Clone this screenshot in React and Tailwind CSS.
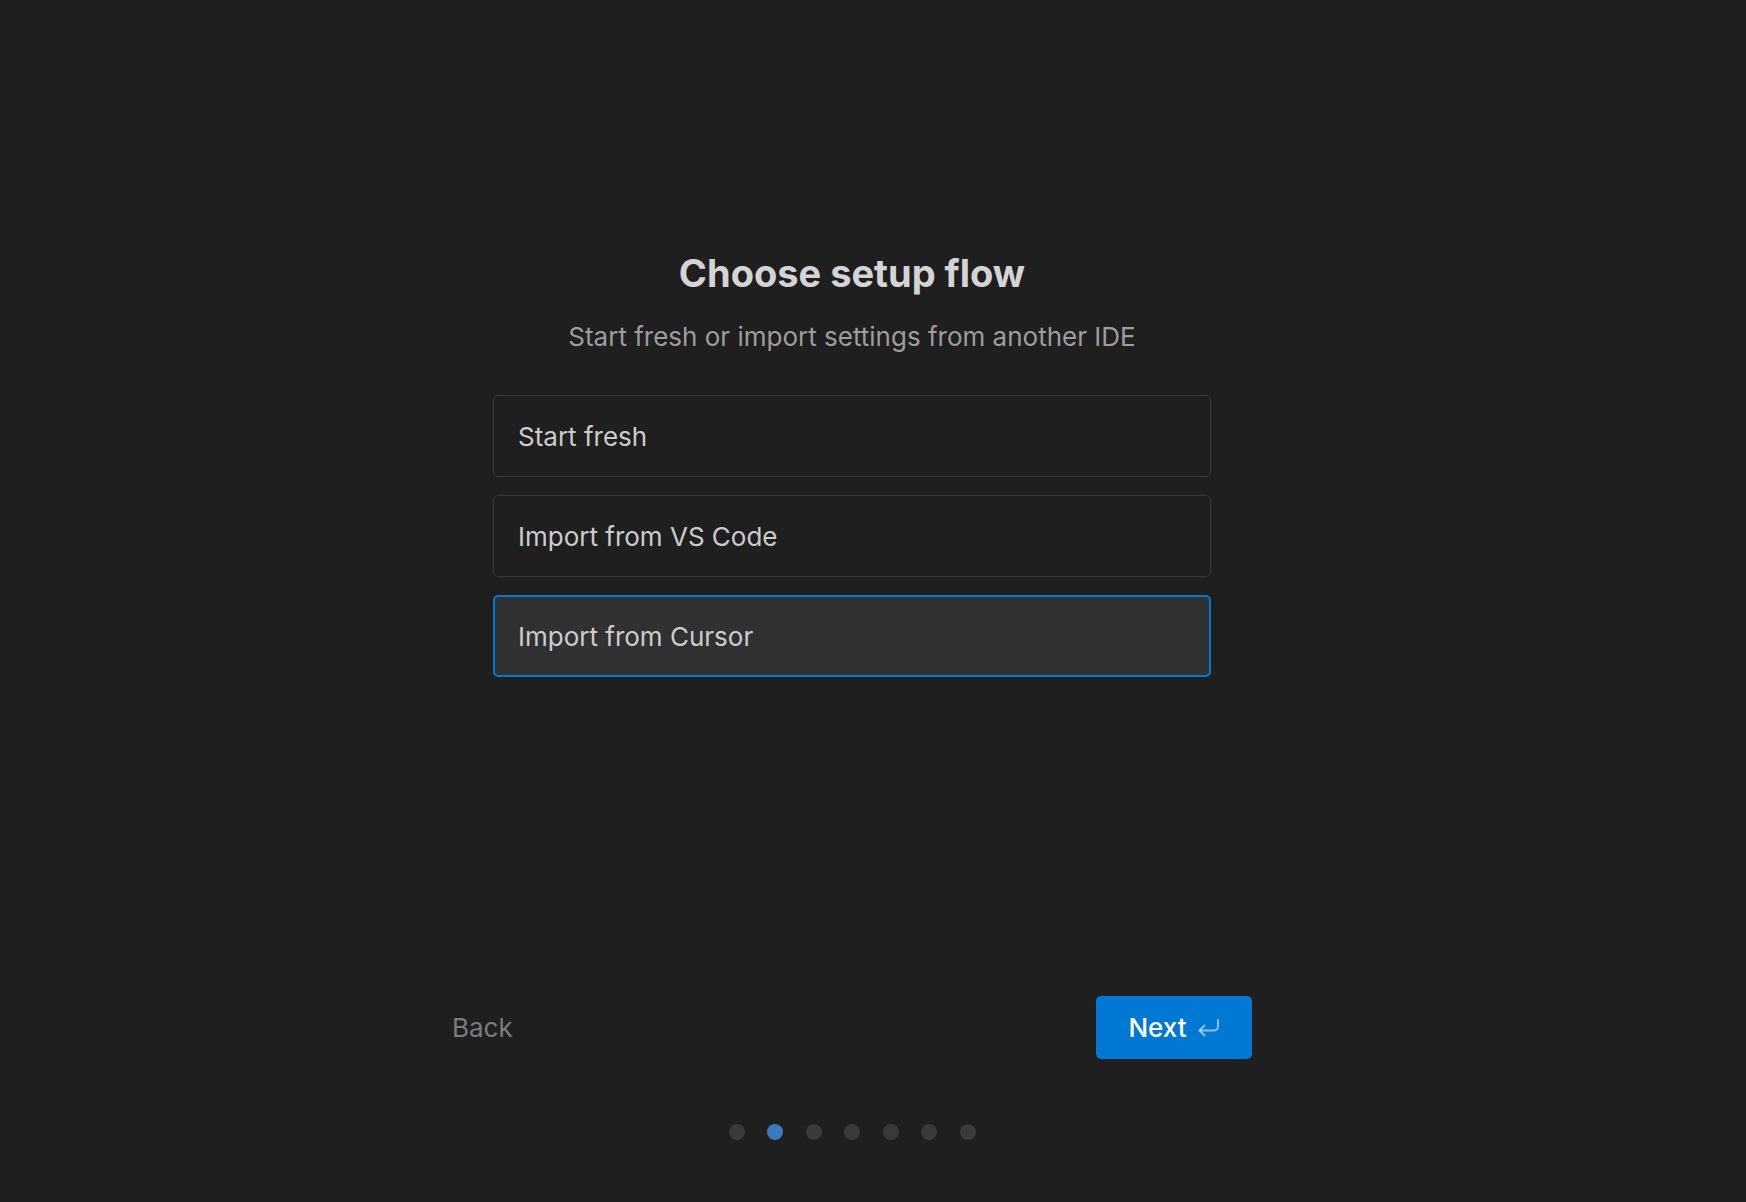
import { useState } from 'react'

const options = ['Start fresh', 'Import from VS Code', 'Import from Cursor']

function ReturnIcon() {
  return (
    <svg
      width="22"
      height="18"
      viewBox="0 0 22 18"
      fill="none"
      stroke="currentColor"
      strokeWidth="2"
      strokeLinecap="round"
      strokeLinejoin="round"
      className="text-white/55"
    >
      <path d="M20 1v6.5a4 4 0 0 1-4 4H2" />
      <path d="M6.5 6.5 1.5 11.5l5 5" />
    </svg>
  )
}

export default function App() {
  const [selected, setSelected] = useState(2)
  const step = 1

  return (
    <div
      className="flex h-[1202px] w-full flex-col items-center bg-[#1f1f1f] pr-[42px]"
      style={{ fontFamily: 'Inter, "Noto Sans", sans-serif' }}
    >
      {/* Heading */}
      <div className="flex flex-col items-center pt-[249px]">
        <h1 className="text-[38px] font-bold leading-[48px] text-[#d4d4d4]">
          Choose setup flow
        </h1>
        <p className="mt-6 text-[26px] leading-[32px] text-[#9d9d9d]">
          Start fresh or import settings from another IDE
        </p>
      </div>

      {/* Options */}
      <div className="mt-[42px] flex w-[718px] flex-col gap-[18px]">
        {options.map((label, i) => (
          <button
            key={label}
            onClick={() => setSelected(i)}
            className={
              i === selected
                ? 'flex h-[82px] items-center rounded-[5px] border-2 border-[#0078d4] bg-[#313131] pl-[23px] text-left text-[26px] text-[#cccccc]'
                : 'flex h-[82px] items-center rounded-[5px] border border-[#3a3a3a] bg-[#1f1f1f] pl-[24px] text-left text-[26px] text-[#cccccc]'
            }
          >
            {label}
          </button>
        ))}
      </div>

      <div className="flex-1" />

      {/* Footer */}
      <div className="flex w-[800px] items-center justify-between">
        <button className="text-[26px] text-[#7c7c7c]">Back</button>
        <button className="flex h-[63px] w-[156px] items-center justify-center gap-[11px] rounded-[5px] bg-[#0078d4] text-[26px] font-medium text-white">
          Next
          <ReturnIcon />
        </button>
      </div>

      {/* Step dots */}
      <div className="mb-[62px] mt-[65px] flex gap-[22.5px]">
        {[0, 1, 2, 3, 4, 5, 6].map((d) => (
          <span
            key={d}
            className={
              d === step
                ? 'h-4 w-4 rounded-full bg-[#3a7bbf]'
                : 'h-4 w-4 rounded-full bg-[#3a3a3a]'
            }
          />
        ))}
      </div>
    </div>
  )
}
